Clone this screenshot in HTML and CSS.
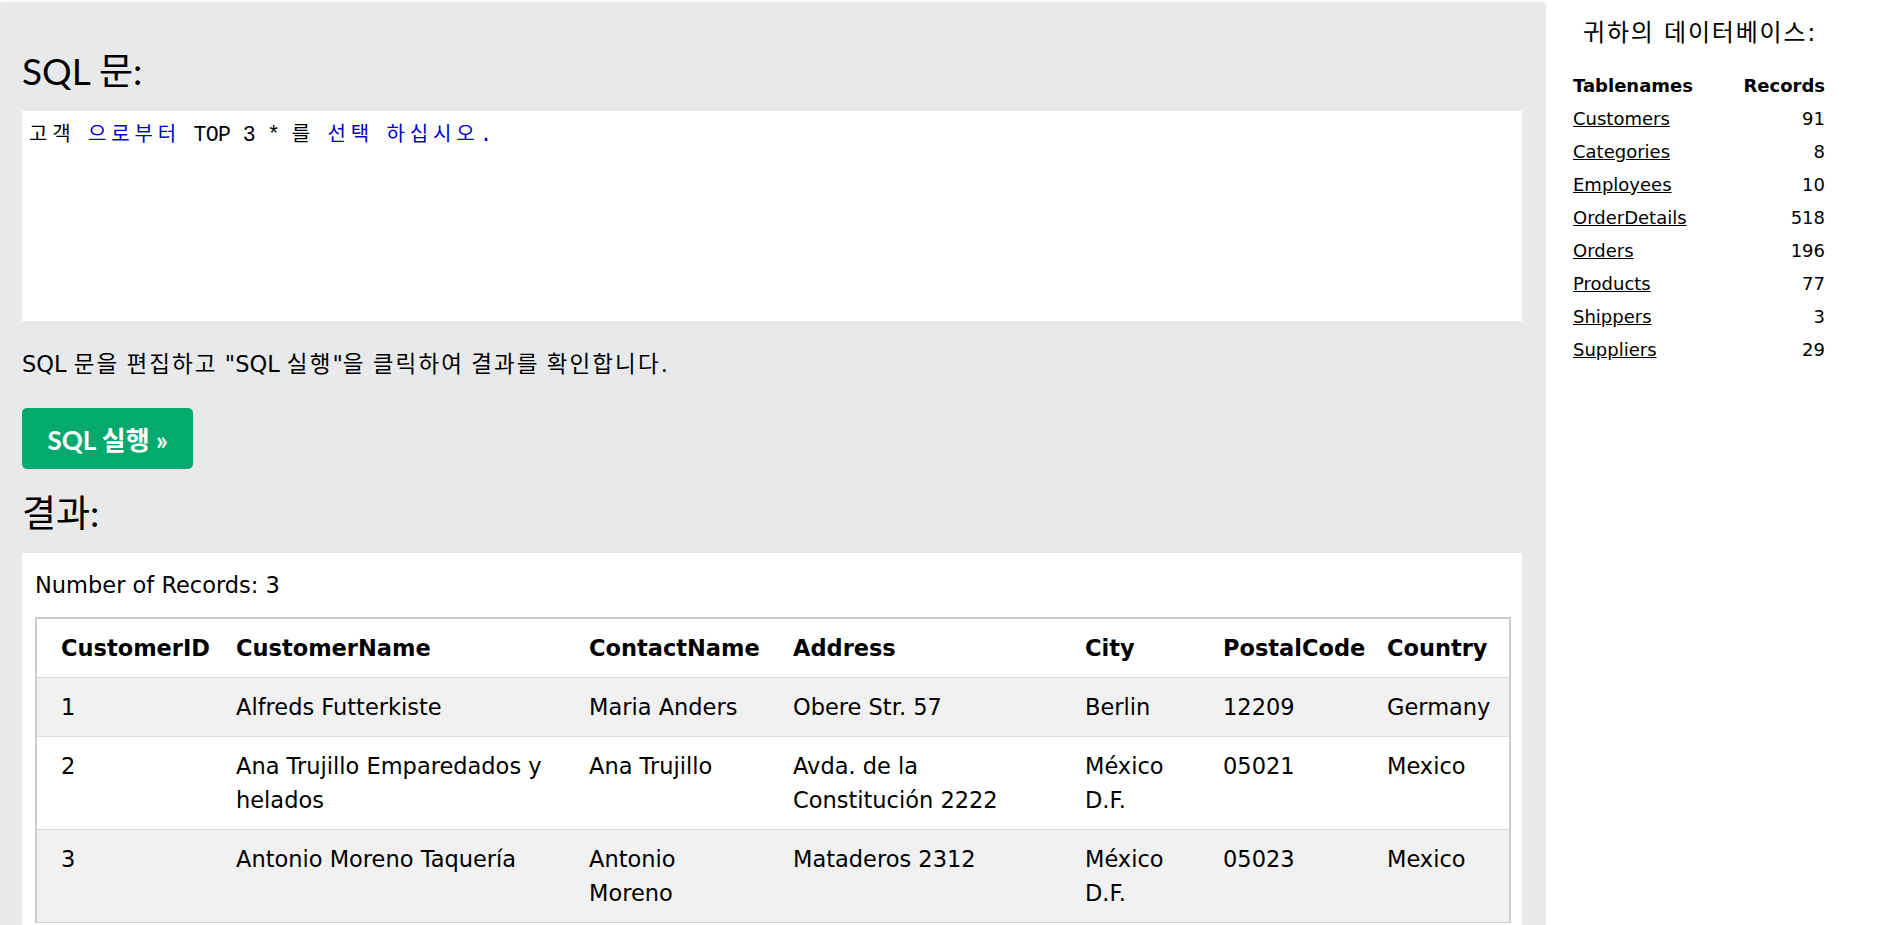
FILE: index.html
```html
<!DOCTYPE html>
<html lang="ko">
<head>
<meta charset="utf-8">
<title>SQL Tryit</title>
<link rel="stylesheet" href="styles.css">
</head>
<body>
<div class="page">
  <main class="panel">
    <h2 class="heading">SQL 문:</h2>
    <div class="editor"><span class="ko">고객</span> <span class="kw ko">으로부터</span> TOP 3 * <span class="ko">를</span> <span class="kw ko">선택</span> <span class="kw"><span class="ko">하십시오</span>.</span></div>
    <p class="hint">SQL <span class="hg">문을</span> <span class="hg">편집하고</span> "SQL <span class="hg">실행</span>"<span class="hg">을</span> <span class="hg">클릭하여</span> <span class="hg">결과를</span> <span class="hg">확인합니다</span>.</p>
    <button class="run" type="button">SQL 실행 »</button>
    <h2 class="heading heading-result">결과:</h2>
    <div class="result">
      <div class="count">Number of Records: 3</div>
      <table class="data">
        <colgroup>
          <col class="c1"><col class="c2"><col class="c3"><col class="c4"><col class="c5"><col class="c6"><col class="c7">
        </colgroup>
        <thead>
          <tr><th>CustomerID</th><th>CustomerName</th><th>ContactName</th><th>Address</th><th>City</th><th>PostalCode</th><th>Country</th></tr>
        </thead>
        <tbody>
          <tr class="odd"><td>1</td><td>Alfreds Futterkiste</td><td>Maria Anders</td><td>Obere Str. 57</td><td>Berlin</td><td>12209</td><td>Germany</td></tr>
          <tr><td>2</td><td>Ana Trujillo Emparedados y helados</td><td>Ana Trujillo</td><td>Avda. de la Constitución 2222</td><td>México D.F.</td><td>05021</td><td>Mexico</td></tr>
          <tr class="odd"><td>3</td><td>Antonio Moreno Taquería</td><td>Antonio Moreno</td><td>Mataderos 2312</td><td>México D.F.</td><td>05023</td><td>Mexico</td></tr>
        </tbody>
      </table>
    </div>
  </main>
  <aside class="sidebar">
    <h3 class="side-title">귀하의 데이터베이스:</h3>
    <table class="db">
      <thead>
        <tr><th class="name">Tablenames</th><th class="num">Records</th></tr>
      </thead>
      <tbody>
        <tr><td class="name"><a href="#">Customers</a></td><td class="num">91</td></tr>
        <tr><td class="name"><a href="#">Categories</a></td><td class="num">8</td></tr>
        <tr><td class="name"><a href="#">Employees</a></td><td class="num">10</td></tr>
        <tr><td class="name"><a href="#">OrderDetails</a></td><td class="num">518</td></tr>
        <tr><td class="name"><a href="#">Orders</a></td><td class="num">196</td></tr>
        <tr><td class="name"><a href="#">Products</a></td><td class="num">77</td></tr>
        <tr><td class="name"><a href="#">Shippers</a></td><td class="num">3</td></tr>
        <tr><td class="name"><a href="#">Suppliers</a></td><td class="num">29</td></tr>
      </tbody>
    </table>
  </aside>
</div>
</body>
</html>
```

FILE: styles.css
```css
html, body {
  margin: 0;
  padding: 0;
  background: #fff;
  color: #000;
  font-family: "DejaVu Sans", "Noto Sans CJK KR", sans-serif;
}

.page {
  display: flex;
  align-items: flex-start;
  height: 925px;
  overflow: hidden;
}

.panel {
  width: 1545px;
  flex: 0 0 1545px;
  box-sizing: border-box;
  margin-top: 3px;
  min-height: 1100px;
  padding: 46px 23px 0 22px;
  background: #e7e9eb;
  box-shadow: 0 0 3px rgba(0, 0, 0, 0.18);
}

.heading {
  margin: 0;
  font-family: "Lato", "Noto Sans CJK KR", sans-serif;
  font-weight: 400;
  font-size: 37px;
  line-height: 44px;
}

.heading-result {
  margin-top: 22px;
}

.editor {
  margin-top: 18px;
  height: 210px;
  box-sizing: border-box;
  padding: 10px 7px 7px;
  background: #fff;
  font-family: "Liberation Mono", "Noto Sans CJK KR", monospace;
  font-size: 21.5px;
  letter-spacing: -0.6px;
  line-height: 28px;
  color: #000;
  white-space: pre;
}

.editor .ko {
  font-size: 20px;
  letter-spacing: 4.9px;
}

.editor .kw {
  color: #0000cd;
}

.hint {
  margin: 27px 0 0;
  font-size: 22.5px;
  line-height: 33.75px;
}

.hint .hg {
  letter-spacing: 2.1px;
}

.run {
  display: block;
  margin-top: 26px;
  height: 61px;
  padding: 0 25.5px;
  border: 0;
  border-radius: 5px;
  background: #04aa6d;
  color: #fff;
  font-family: "Lato", "Noto Sans CJK KR", sans-serif;
  font-weight: 700;
  font-size: 26px;
  cursor: pointer;
}

.result {
  margin-top: 18px;
  background: #fff;
  padding: 15px 11px 20px 13px;
}

.count {
  font-size: 22.5px;
  line-height: 34px;
  margin-bottom: 15px;
}

.data {
  width: 100%;
  table-layout: fixed;
  border-collapse: separate;
  border-spacing: 0;
  border: 2px solid #ccc;
  border-bottom-width: 1px;
  font-size: 22.5px;
  line-height: 34px;
}

.data .c1 { width: 187px; }
.data .c2 { width: 353px; }
.data .c3 { width: 204px; }
.data .c4 { width: 292px; }
.data .c5 { width: 138px; }
.data .c6 { width: 164px; }
.data .c7 { width: 134px; }

.data th,
.data td {
  padding: 12px 12px;
  text-align: left;
  vertical-align: top;
}

.data th:first-child,
.data td:first-child {
  padding-left: 24px;
}

.data th:nth-child(3),
.data td:nth-child(3) {
  padding-right: 16px;
}

.data th {
  font-weight: 700;
  background: #fff;
}

.data td {
  border-top: 1px solid #ddd;
  background: #fff;
}

.data tr.odd td {
  background: #f1f1f1;
}

.sidebar {
  flex: 1;
  padding: 17px 0 0 28px;
}

.side-title {
  margin: 0 0 0 10px;
  font-family: "DejaVu Sans", "Noto Sans CJK KR", sans-serif;
  font-weight: 400;
  font-size: 24px;
  line-height: 32px;
  letter-spacing: 1.8px;
}

.db {
  margin-top: 20px;
  width: 252px;
  border-collapse: collapse;
  font-size: 18px;
  line-height: 27px;
}

.db th,
.db td {
  padding: 3px 0;
}

.db th {
  font-weight: 700;
}

.db .name {
  text-align: left;
}

.db .num {
  text-align: right;
}

.db a {
  color: #000;
  text-decoration: underline;
}
```
